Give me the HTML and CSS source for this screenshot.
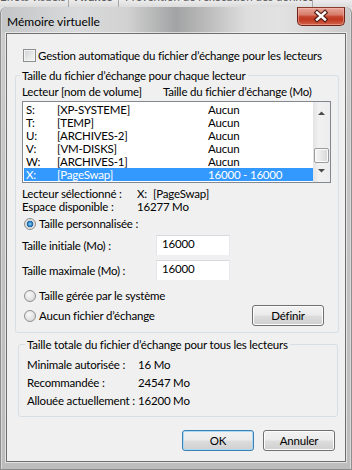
FILE: index.html
```html
<!DOCTYPE html>
<html lang="fr">
<head>
<meta charset="utf-8">
<title>Mémoire virtuelle</title>
<link rel="stylesheet" href="styles.css">
</head>
<body>
<div class="parent-strip">
  <div class="ptab ptab-1">Effets visuels</div>
  <div class="ptab ptab-2">Avancé</div>
  <div class="ptab ptab-3">Prévention de l’exécution des données</div>
</div>
<div class="window">
  <div class="titlebar">
    <div class="title">Mémoire virtuelle</div>
    <div class="close">
      <svg width="48" height="19" viewBox="0 0 48 19">
        <path d="M20 5.5 L28 12.5 M28 5.5 L20 12.5" stroke="#4b1a12" stroke-width="4.6" stroke-linecap="square" fill="none"/>
        <path d="M20 5.5 L28 12.5 M28 5.5 L20 12.5" stroke="#ffffff" stroke-width="2.4" stroke-linecap="square" fill="none"/>
      </svg>
    </div>
  </div>
  <div class="client">
    <div class="check-row">
      <span class="checkbox"></span>
      <span>Gestion automatique du fichier d’échange pour les lecteurs</span>
    </div>

    <fieldset class="group group-drives">
      <legend>Taille du fichier d’échange pour chaque lecteur</legend>
      <div class="cols">
        <span>Lecteur [nom de volume]</span>
        <span>Taille du fichier d’échange (Mo)</span>
      </div>
      <div class="listbox">
        <div class="rows">
          <div class="row"><span>S:</span><span>[XP-SYSTEME]</span><span>Aucun</span></div>
          <div class="row"><span>T:</span><span>[TEMP]</span><span>Aucun</span></div>
          <div class="row"><span>U:</span><span>[ARCHIVES-2]</span><span>Aucun</span></div>
          <div class="row"><span>V:</span><span>[VM-DISKS]</span><span>Aucun</span></div>
          <div class="row"><span>W:</span><span>[ARCHIVES-1]</span><span>Aucun</span></div>
          <div class="row selected"><span>X:</span><span>[PageSwap]</span><span>16000 - 16000</span></div>
        </div>
        <div class="scrollbar">
          <div class="sb-btn">
            <svg width="17" height="17" viewBox="0 0 17 17"><path d="M5 13 L8.5 9.5 L12 13 Z" fill="#4a4a4a"/></svg>
          </div>
          <div class="sb-track"><div class="thumb"></div></div>
          <div class="sb-btn">
            <svg width="17" height="17" viewBox="0 0 17 17"><path d="M5 4 L12 4 L8.5 7.5 Z" fill="#4a4a4a"/></svg>
          </div>
        </div>
      </div>

      <div class="info first"><span>Lecteur sélectionné :</span><span><span class="drv">X:</span>[PageSwap]</span></div>
      <div class="info"><span>Espace disponible :</span><span>16277 Mo</span></div>

      <div class="radio-row custom"><span class="radio checked"></span><span>Taille personnalisée :</span></div>

      <div class="field-row"><span>Taille initiale (Mo) :</span><div class="input">16000</div></div>
      <div class="field-row"><span>Taille maximale (Mo) :</span><div class="input">16000</div></div>

      <div class="radio-row system"><span class="radio"></span><span>Taille gérée par le système</span></div>
      <div class="radio-row none"><span class="radio"></span><span>Aucun fichier d’échange</span><button class="btn define">Définir</button></div>
    </fieldset>

    <fieldset class="group group-total">
      <legend>Taille totale du fichier d’échange pour tous les lecteurs</legend>
      <div class="stat"><span>Minimale autorisée :</span><span>16 Mo</span></div>
      <div class="stat"><span>Recommandée :</span><span>24547 Mo</span></div>
      <div class="stat"><span>Allouée actuellement :</span><span>16200 Mo</span></div>
    </fieldset>

    <div class="buttons">
      <button class="btn default">OK</button>
      <button class="btn">Annuler</button>
    </div>
  </div>
</div>
</body>
</html>
```
FILE: styles.css
```css
* { box-sizing: border-box; }

html, body { margin: 0; padding: 0; }

body {
  width: 352px;
  height: 470px;
  overflow: hidden;
  background: #e4e4e4;
  font-family: Lato, "Noto Sans", sans-serif;
  font-size: 11.5px;
  letter-spacing: -0.2px;
  color: #000;
}

/* parent dialog visible behind the top edge */
.parent-strip {
  display: flex;
  height: 7px;
  overflow: hidden;
  background: linear-gradient(#ececec, #dcdcdc);
  color: #5a5a5a;
  line-height: 12px;
  letter-spacing: 0;
}
.ptab {
  margin-top: -9px;
  height: 20px;
  white-space: nowrap;
  overflow: hidden;
  border-right: 1px solid #a9a9a9;
}
.ptab-1 { width: 69px; text-align: right; padding-right: 6px; }
.ptab-2 { width: 50px; padding-left: 6px; font-weight: bold; }
.ptab-3 { width: 194px; padding-left: 6px; }

/* window frame */
.window {
  display: flex;
  flex-direction: column;
  height: 463px;
  padding: 0 6px 8px;
  border-radius: 6px 6px 0 0;
  background:
    linear-gradient(to right, #c4c5c6 0, #d9dadb 22%, #d2d2d2 36%, #a2a3a4 50%, #b9b9b9 58%, #dedede 70%, #e2e2e2 80%, #c9c9c9 100%) top / 100% 26px no-repeat,
    linear-gradient(#cdcdcd, #c3c3c3 200px, #bdbdbd);
  box-shadow: inset 1px 0 0 #8f8f8f, inset -1px 0 0 #8f8f8f, inset 0 -1px 0 #8a8a8a, inset 2px 0 0 #d8d8d8, inset -2px 0 0 #d8d8d8;
}

.titlebar {
  display: flex;
  justify-content: space-between;
  align-items: flex-start;
  height: 26px;
}
.title {
  margin: 7px 0 0 1px;
  font-size: 12px;
  letter-spacing: 0;
  line-height: 15px;
  color: #000;
}
.close {
  width: 48px;
  height: 19px;
  margin-right: 1px;
  border: 1px solid #6e2418;
  border-top-color: #8a3a2c;
  border-radius: 0 0 5px 5px;
  background: linear-gradient(#e8a89b 0, #d77b68 40%, #c4432b 52%, #c13a22 70%, #d2654b 100%);
  box-shadow: inset 0 0 0 1px rgba(255, 200, 190, 0.45);
  overflow: hidden;
}
.close svg { display: block; margin: -1px 0 0 -1px; }

/* client area */
.client {
  flex: 1;
  display: flex;
  flex-direction: column;
  border: 1px solid #6f6f6f;
  background: #f0f0f0;
  box-shadow: 0 0 0 1px rgba(255, 255, 255, 0.55);
}

.check-row {
  display: flex;
  align-items: center;
  gap: 2px;
  margin: 14px 0 0 16px;
  line-height: 15px;
  white-space: nowrap;
}
.checkbox {
  flex: none;
  width: 13px;
  height: 13px;
  border: 1px solid #8e8f8f;
  background: linear-gradient(135deg, #cfd1d3 0, #e6e7e8 55%, #f7f7f7 100%);
  box-shadow: inset 0 0 0 1px #f4f4f4;
}

/* group boxes */
.group {
  min-width: 0;
  margin: 5px 0 0 8px;
  width: 324px;
  border: 1px solid #d5dfe5;
  border-radius: 3px;
  padding: 0 7px 6px 6px;
}
.group legend {
  padding: 0 2px;
  margin-left: -2px;
  line-height: 15px;
}

.cols {
  display: grid;
  grid-template-columns: 141px 1fr;
  margin-top: 1px;
  line-height: 15px;
  white-space: nowrap;
}

.listbox {
  display: flex;
  width: 309px;
  height: 82px;
  margin-top: 2px;
  border: 1px solid #828790;
  background: #fff;
  padding: 1px 0 1px 1px;
}
.rows { flex: 1; }
.row {
  display: grid;
  grid-template-columns: 31px 151px 1fr;
  height: 13px;
  line-height: 13px;
  padding-left: 2px;
  white-space: nowrap;
}
.row.selected { background: #3399ff; color: #fff; }

.scrollbar {
  width: 17px;
  margin: -1px 0;
  display: flex;
  flex-direction: column;
  background: linear-gradient(to right, #e2e2e2 0, #f1f1f1 35%, #ececec 100%);
}
.sb-btn { height: 17px; }
.sb-btn svg { display: block; }
.sb-track {
  flex: 1;
  display: flex;
  flex-direction: column;
}
.thumb {
  height: 15px;
  margin: auto 1px 2px;
  border: 1px solid #9b9b9b;
  border-radius: 2px;
  background: linear-gradient(to right, #f6f6f6 0, #e8e8e8 50%, #d6d6d6 100%);
  box-shadow: inset 0 0 0 1px #fbfbfb;
}

.info {
  display: grid;
  grid-template-columns: 115px 1fr;
  line-height: 13px;
  white-space: nowrap;
}
.info.first { margin-top: 4px; }
.drv { display: inline-block; width: 16px; }

.radio-row {
  display: flex;
  align-items: center;
  line-height: 15px;
  white-space: nowrap;
}
.radio-row.custom { margin-top: 3px; }
.radio-row.system { margin-top: 7px; }
.radio-row.none { margin-top: 2px; height: 21px; }

.radio {
  flex: none;
  width: 12px;
  height: 12px;
  margin: 0 3px 0 2px;
  border-radius: 50%;
  border: 1px solid #8e8f8f;
  background: radial-gradient(circle at 40% 35%, #f8f8f8 0, #e4e4e4 55%, #cfcfcf 100%);
}
.radio.checked {
  background: radial-gradient(circle at 50% 50%, #8fd3f7 0, #2f86c8 2px, #1c5f9c 3px, #dcdcdc 3.6px, #eeeeee 100%);
}

.field-row {
  display: grid;
  grid-template-columns: 134px 74px;
  align-items: center;
  height: 21px;
  margin-top: 4px;
  white-space: nowrap;
}
.input {
  height: 21px;
  border: 1px solid;
  border-color: #d6d9de #e5e8ec #eef0f3 #e3e6ea;
  background: #fff;
  padding: 0 0 0 5px;
  line-height: 15px;
}

/* buttons */
.btn {
  width: 72px;
  height: 21px;
  padding: 0;
  border: 1px solid #707070;
  border-radius: 3px;
  background: linear-gradient(#f2f2f2 0, #ebebeb 48%, #dddddd 52%, #cfcfcf 100%);
  box-shadow: inset 0 0 0 1px #fcfcfc;
  font-family: inherit;
  font-size: inherit;
  letter-spacing: inherit;
  line-height: 19px;
  color: #000;
}
.define { margin-left: auto; margin-right: 7px; }
.btn.default {
  border-color: #3c7fb1;
  box-shadow: inset 0 0 0 1px #a8dbf6;
}

.group-total {
  margin: 4px 0 0 11px;
  width: 320px;
  padding: 4px 7px 6px 8px;
}
.stat {
  display: grid;
  grid-template-columns: 111px 1fr;
  line-height: 18px;
  white-space: nowrap;
}

.buttons {
  display: flex;
  justify-content: flex-end;
  gap: 9px;
  margin: 13px 10px 0 0;
}
```
